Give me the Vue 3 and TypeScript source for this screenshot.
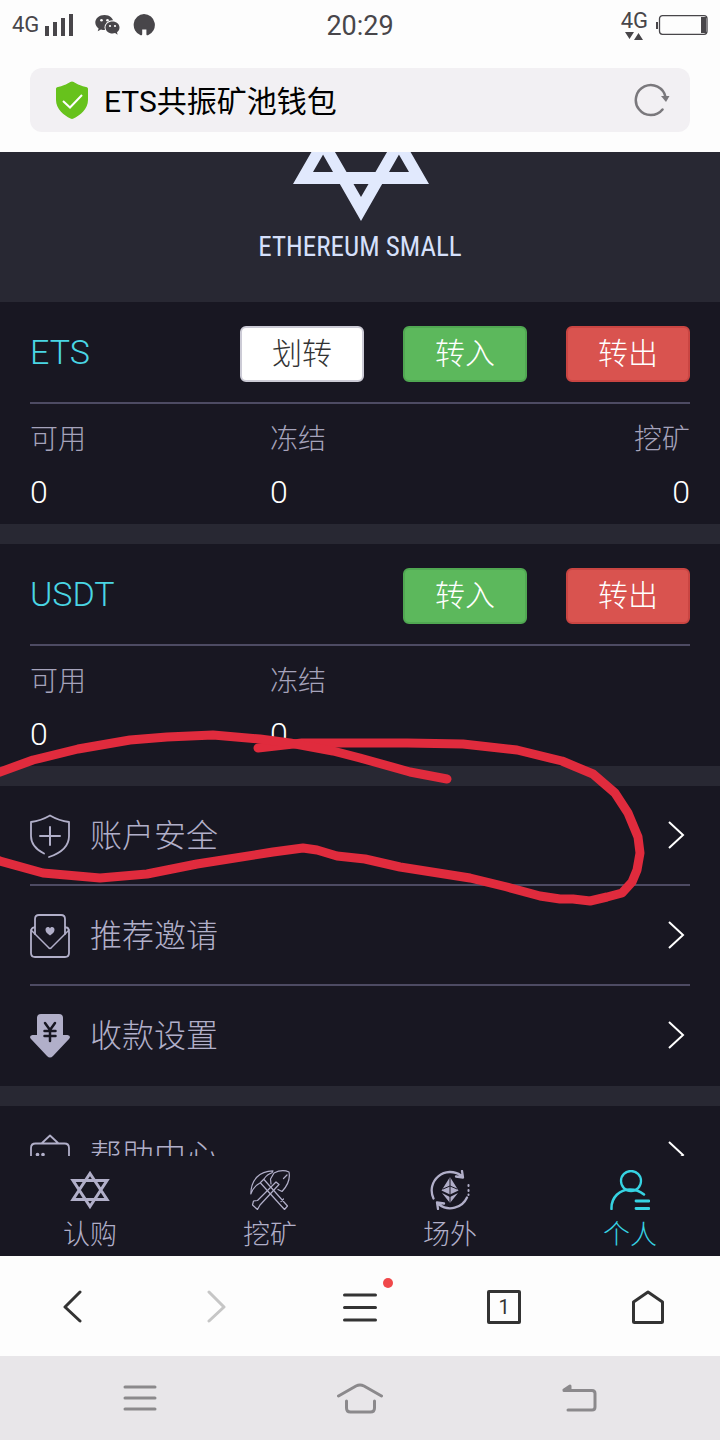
<script setup lang="ts">
import { ref } from 'vue'

interface Action { label: string; kind: 'plain' | 'in' | 'out' }
interface Field { label: string; value: number }
interface Asset { name: string; actions: Action[]; fields: Field[] }
interface Entry { id: string; label: string }

const title = ref('ETS共振矿池钱包')

const assets: Asset[] = [
  {
    name: 'ETS',
    actions: [
      { label: '划转', kind: 'plain' },
      { label: '转入', kind: 'in' },
      { label: '转出', kind: 'out' },
    ],
    fields: [
      { label: '可用', value: 0 },
      { label: '冻结', value: 0 },
      { label: '挖矿', value: 0 },
    ],
  },
  {
    name: 'USDT',
    actions: [
      { label: '转入', kind: 'in' },
      { label: '转出', kind: 'out' },
    ],
    fields: [
      { label: '可用', value: 0 },
      { label: '冻结', value: 0 },
    ],
  },
]

const groups: Entry[][] = [
  [
    { id: 'security', label: '账户安全' },
    { id: 'invite', label: '推荐邀请' },
    { id: 'payment', label: '收款设置' },
  ],
  [{ id: 'help', label: '帮助中心' }],
]

const tabs: Entry[] = [
  { id: 'subscribe', label: '认购' },
  { id: 'mining', label: '挖矿' },
  { id: 'otc', label: '场外' },
  { id: 'me', label: '个人' },
]
const activeTab = ref('me')
</script>

<template>
  <div class="screen">
    <header class="top">
      <div class="status">
        <div class="status-side">
          <span class="net">4G</span>
          <svg class="signal" width="28" height="22" viewBox="0 0 28 22" fill="#48464a">
            <path d="M0 12h4v10H0zM8 8h4v14H8zM16 4h4v18h-4zM24 0h4v22h-4z" />
          </svg>
          <svg class="wechat" width="25" height="22" viewBox="0 0 25 22">
            <path fill="#48464a" d="M9.500 1C4.300 1 .3 4.400.3 8.600c0 2.400 1.300 4.400 3.300 5.800L2.700 17.200l3.300-1.700c1.100.4 2.300.6 3.500.6 5.200 0 9.100-3.400 9.100-7.500S14.700 1 9.500 1z" />
            <ellipse cx="17.500" cy="13.500" rx="8" ry="7.200" fill="#fdfdfd" />
            <path fill="#48464a" d="M17.500 7.500c-3.900 0-7 2.600-7 6s3.100 6 7 6c.9 0 1.800-.1 2.600-.4l2.500 1.600-.6-2.500c1.600-1.100 2.500-2.800 2.500-4.700 0-3.400-3.100-6-7-6z" />
            <g fill="#fdfdfd"><circle cx="6.500" cy="6.300" r="1.300" /><circle cx="12.500" cy="6.300" r="1.300" /><circle cx="15" cy="12" r="1.100" /><circle cx="20" cy="12" r="1.100" /></g>
          </svg>
          <svg class="badge" width="22" height="22" viewBox="0 0 22 22">
            <path fill="#48464a" d="M11 0a11 11 0 0 1 4 21.200c-.9.400-1.600 0-1.600-1V15.500H9.200V20c0 1-.7 1.600-1.600 1.200A11 11 0 0 1 11 0z" />
          </svg>
        </div>
        <time class="clock">20:29</time>
        <div class="status-side end">
          <div class="data">
            <span class="net">4G</span>
            <svg width="18" height="8" viewBox="0 0 18 8" fill="#48464a"><path d="M0 0h9L4.500 7zM9 8h9l-4.500-7z" /></svg>
          </div>
          <svg width="52" height="20" viewBox="0 0 52 20">
            <rect x="3.500" y=".7" width="47.500" height="18.600" rx="3" fill="none" stroke="#48464a" stroke-width="1.300" />
            <path d="M0 7h2v7H0zM45 2h5v16h-5z" fill="#48464a" />
          </svg>
        </div>
      </div>
      <div class="address">
        <svg width="34" height="38" viewBox="0 0 34 38">
          <path d="M17 .5C19 .5 22 4 31 6c1.500.4 2 1 2 2v11c0 9-8 15.500-14.500 18.500-1 .5-2 .5-3 0C9 34.500 1 28 1 19V8c0-1 .5-1.600 2-2C12 4 15 .5 17 .5z" fill="#67c21c" />
          <path d="M8 20l7 6.500L27 14" fill="none" stroke="#fff" stroke-width="2" />
        </svg>
        <input v-model="title" class="title" type="text" aria-label="网址" />
        <button class="icon-btn" type="button" aria-label="刷新">
          <svg width="36" height="34" viewBox="0 0 36 34">
            <path d="M28.500 26.500A15 15 0 1 1 31.500 14" fill="none" stroke="#7a787c" stroke-width="2.500" stroke-linecap="round" />
            <path d="M27 13l8.500 0-3.500 6z" fill="#7a787c" />
          </svg>
        </button>
      </div>
    </header>

    <main class="content">
      <div class="hero">
        <svg class="star" width="138" height="69" viewBox="291 152 138 69" fill="#e1e9fd" fill-rule="evenodd">
          <path d="M361 66L293 184H429zM361 89L409 172H313z" />
          <path d="M361 221L293 102H429zM361 197L409 114H313z" />
        </svg>
        <h1 class="brand">ETHEREUM SMALL</h1>
      </div>

      <section v-for="asset in assets" :key="asset.name" class="asset">
        <div class="asset-head">
          <h2 class="asset-name">{{ asset.name }}</h2>
          <button v-for="a in asset.actions" :key="a.label" type="button" class="action" :class="a.kind">{{ a.label }}</button>
        </div>
        <dl class="fields">
          <div v-for="f in asset.fields" :key="f.label" class="field">
            <dt>{{ f.label }}</dt>
            <dd>{{ f.value }}</dd>
          </div>
        </dl>
      </section>

      <nav v-for="(group, i) in groups" :key="i" class="group">
        <a v-for="entry in group" :key="entry.id" class="entry" :href="'#' + entry.id">
          <svg v-if="entry.id === 'security'" width="40" height="44" viewBox="0 0 40 44" class="line">
            <path d="M14 39.500C6 35.500 1 30 1 22V8C9 7 14 5 20 1.500 26 5 31 7 39 8v14c0 10-8 17-20 21" stroke-width="1.800" />
            <path d="M10 22h20M20 13v18" stroke-width="2" />
          </svg>
          <svg v-else-if="entry.id === 'invite'" width="40" height="44" viewBox="0 0 40 44" class="line">
            <path d="M5 20V5q0-4 4-4h22q4 0 4 4v15M4 13.500Q1 13.500 1 18v21q0 4 4 4h30q4 0 4-4V18q0-4.500-3-4.500" stroke-width="1.800" />
            <path d="M1 16l17.500 17.500Q20 35.500 21.500 33.500L39 16" stroke-width="1.500" />
            <path class="solid" d="M20 21.500c-3-2-4.500-3.800-4.500-5.800 0-3 3.500-3.400 4.500-1.200 1-2.200 4.500-1.800 4.500 1.200 0 2-1.500 3.800-4.500 5.800z" />
          </svg>
          <svg v-else-if="entry.id === 'payment'" width="40" height="44" viewBox="0 0 40 44" class="line">
            <path class="solid" d="M7 4q0-4 4-4h18q4 0 4 4v17h4.500q4 1 1.500 4L23 42q-3 3-6 0L1 25q-2.500-3 1.500-4H7z" />
            <path d="M15 9l5 7 5-7M14.500 17h11M14.500 22h11M20 16v11" stroke="#181722" stroke-width="2.500" />
          </svg>
          <svg v-else width="40" height="44" viewBox="0 0 40 44" class="line">
            <path d="M1 44V14q0-4.500 4.500-4.500h29q4.500 0 4.500 4.500v30M12 9l8-7.500L28 9" stroke-width="1.800" />
            <circle class="solid" cx="7.500" cy="20.500" r="1.800" /><circle class="solid" cx="13" cy="20.500" r="1.800" />
          </svg>
          <span class="entry-label">{{ entry.label }}</span>
          <svg width="22" height="30" viewBox="0 0 22 30" fill="none" stroke="#fff" stroke-width="2"><path d="M1 1l14 13L1 27" /></svg>
        </a>
      </nav>

      <svg class="scribble" viewBox="0 152 720 1004" fill="none" stroke="#e02b3d" stroke-width="9" stroke-linecap="round" stroke-linejoin="round">
        <path d="M258 748L302 743H407L463 744 517 750 562 761 593 774 615 793 628 813 638 837 640 853 637 870 632 882 622 893 607 897 590 901 573 899H560L540 896 507 887 470 878 400 867 365 859 337 856 317 850 303 848 273 852 197 864 147 874 100 878 43 873 0 861-10 857" />
        <path d="M-10 776L0 772 33 760 78 749 130 740 167 737 213 735 260 739 290 743 333 751 360 758 410 772 447 779" />
      </svg>
    </main>

    <nav class="tabs">
      <a v-for="tab in tabs" :key="tab.id" class="tab" :class="{ active: tab.id === activeTab }" :href="'#' + tab.id" @click="activeTab = tab.id">
        <svg v-if="tab.id === 'subscribe'" width="40" height="40" viewBox="0 0 40 40" class="line sharp">
          <path d="M20 3.500L37 29.500H3zM20 36.500L37 10.500H3z" stroke-width="3" />
        </svg>
        <svg v-else-if="tab.id === 'mining'" width="40" height="40" viewBox="0 0 40 40" class="line">
          <path d="M.8 24C1 10 9 1 23 .8l-1 2C18 4 16 6 14 9l-4 4C6 15 3 18 .8 24zM14 9.500L37.500 36l-3 3.500L10.500 13M31 31.500l2.500-2.500" stroke-width="1.200" />
          <path d="M21 14l-.5-5L24 3q8-4 15-1Q41 12 32 21.500l-4-2M26 12l3 2.500L10 35l-2.500 4.500-5-4.500 1-4 4-.5zM37 5l-3.500 3.500" stroke-width="1.200" />
        </svg>
        <svg v-else-if="tab.id === 'otc'" width="40" height="40" viewBox="0 0 40 40" class="line">
          <path d="M3.500 28.500A18.500 18.500 0 0 1 31 5.500M32 1l1 6.500-7-1M37 27.500A18.500 18.500 0 0 1 9 34.500M8 39L7 32.500l7 1" stroke-width="2.300" />
          <path class="solid" d="M20 7l8.500 13.500-8.500 4-8.500-4zM12 23l8 4 8-4-8 10z" />
          <path d="M20 7v26M13 19l7-3 7 3" stroke="#181722" stroke-width="1" />
          <path d="M38.500 15v1M38.500 20v1M38.500 24.500v.5" stroke-width="2" />
        </svg>
        <svg v-else width="40" height="40" viewBox="0 0 40 40" class="line">
          <circle cx="21" cy="11" r="10" stroke-width="2.300" />
          <path d="M1.500 39C1 27 10 19.500 20 19.500q8 0 14 5" stroke-width="2.500" />
          <path d="M26 31h13M26 38.500h13" stroke-width="2.800" />
        </svg>
        <span>{{ tab.label }}</span>
      </a>
    </nav>

    <nav class="browser">
      <button type="button" aria-label="后退"><svg width="32" height="34" viewBox="0 0 32 34" class="ink"><path d="M24 2L9 17l15 14" /></svg></button>
      <button type="button" aria-label="前进" disabled><svg width="32" height="34" viewBox="0 0 32 34" class="ink faint"><path d="M9 2l15 15L9 31" /></svg></button>
      <button type="button" aria-label="菜单">
        <span class="menu-icon">
          <svg width="34" height="34" viewBox="0 0 34 34" class="ink"><path d="M1.500 5h31M1.500 17.500h31M1.500 30h31" /></svg>
          <i class="dot"></i>
        </span>
      </button>
      <button type="button" aria-label="窗口"><span class="count">1</span></button>
      <button type="button" aria-label="主页"><svg width="34" height="36" viewBox="0 0 34 36" class="ink"><path d="M17 3L31.500 13v19.500q0 1-1 1h-27q-1 0-1-1V13z" /></svg></button>
    </nav>

    <nav class="system">
      <button type="button" aria-label="最近任务"><svg width="34" height="28" viewBox="0 0 34 28" class="soft"><path d="M2 3h30M2 14h30M2 25h30" /></svg></button>
      <button type="button" aria-label="桌面"><svg width="46" height="32" viewBox="0 0 46 32" class="soft"><path d="M1.500 14L19 4q4-2 8 0l17.500 10M9.500 19v7q0 4 4 4h20q4 0 4-4v-7" /></svg></button>
      <button type="button" aria-label="返回"><svg width="36" height="30" viewBox="0 0 36 30" class="soft"><path d="M2 7.500h28q3 0 3 3V24q0 3-3 3H6M2 7L8 3v4" /></svg></button>
    </nav>
  </div>
</template>

<style>
body { margin: 0; background: #181722; }
</style>

<style scoped>
.screen {
  display: flex;
  flex-direction: column;
  height: 100vh;
  font-family: Roboto, "Noto Sans CJK SC", sans-serif;
  font-weight: 300;
  background: #181722;
}
svg { display: block; flex: none; }
button { padding: 0; border: 0; background: none; font: inherit; color: inherit; }
a { color: inherit; text-decoration: none; }

.top { flex: none; background: #fdfdfd; padding-bottom: 20px; }
.status {
  display: grid;
  grid-template-columns: 1fr auto 1fr;
  align-items: center;
  height: 50px;
  padding: 0 12px;
  margin-bottom: 18px;
  color: #48464a;
  font-weight: 400;
}
.status-side { display: flex; align-items: center; }
.end { justify-content: flex-end; gap: 8px; }
.net { font-size: 22px; line-height: 22px; }
.signal { margin-left: 6px; }
.wechat { margin-left: 22px; }
.badge { margin-left: 13px; }
.clock { padding-top: 2px; font-size: 27px; line-height: 36px; }
.data { display: flex; flex-direction: column; align-items: center; }
.address {
  display: flex;
  align-items: center;
  height: 64px;
  margin: 0 30px;
  padding: 0 20px 0 25px;
  border-radius: 12px;
  background: #f2f0f3;
}
.title {
  flex: 1;
  min-width: 0;
  margin-left: 15px;
  padding: 4px 0 0;
  border: 0;
  outline: 0;
  background: none;
  color: #000;
  font: inherit;
  font-size: 30px;
  font-weight: 400;
  line-height: 44px;
}

.content { position: relative; flex: 1; min-height: 0; overflow: hidden; }
.hero {
  display: flex;
  flex-direction: column;
  align-items: center;
  height: 150px;
  background: #282833;
}
.brand {
  margin: 8px 0 0;
  color: #d6e0fb;
  font-family: "Liberation Sans Narrow", "Roboto Condensed", Roboto, sans-serif;
  font-size: 27px;
  font-weight: 400;
  line-height: 36px;
}

.asset { padding: 0 30px; border-bottom: 20px solid #282833; }
.asset-head {
  display: flex;
  align-items: center;
  gap: 39px;
  box-sizing: border-box;
  height: 102px;
  padding-top: 4px;
  border-bottom: 2px solid #4d4b63;
}
.asset-name {
  flex: 1;
  margin: 0;
  padding-bottom: 4px;
  color: #4ad6e4;
  font-size: 34px;
  font-weight: 300;
  line-height: 44px;
}
.action {
  box-sizing: border-box;
  width: 124px;
  height: 56px;
  border: 2px solid;
  border-radius: 6px;
  color: #fff;
  font-size: 30px;
  line-height: 52px;
}
.plain { background: #fff; border-color: #cccbd6; color: #333; }
.in { background: #5cb85c; border-color: #50a852; }
.out { background: #d9534f; border-color: #ca4542; }
.fields { display: grid; grid-template-columns: 4fr 4fr 3fr; margin: 0; height: 120px; }
.field:nth-child(3) { text-align: right; }
dt { padding-top: 16px; color: #a5a3bb; font-size: 28px; line-height: 40px; }
dd { margin: 12px 0 0; color: #fff; font-size: 32px; line-height: 40px; }

.group { border-bottom: 20px solid #282833; }
.entry {
  display: flex;
  align-items: center;
  box-sizing: border-box;
  height: 100px;
  margin: 0 30px;
  padding-top: 2px;
  border-bottom: 2px solid #4d4b63;
  color: #b1afc9;
}
.entry:last-child { border-bottom-color: transparent; }
.entry-label { flex: 1; margin-left: 20px; font-size: 32px; line-height: 48px; }
.line { fill: none; stroke: currentColor; stroke-linecap: round; stroke-linejoin: round; }
.sharp { stroke-linejoin: miter; }
.solid { fill: currentColor; stroke: none; }
.scribble { position: absolute; top: 0; left: 0; width: 100%; pointer-events: none; }

.tabs { flex: none; display: flex; height: 100px; background: #181722; color: #b1afc9; }
.tab {
  flex: 1;
  display: flex;
  flex-direction: column;
  align-items: center;
  padding-top: 14px;
  font-size: 27px;
  line-height: 50px;
}
.active { color: #36d3e2; }

.browser {
  flex: none;
  display: flex;
  box-sizing: border-box;
  height: 100px;
  padding-top: 2px;
  background: #fdfdfd;
  color: #333;
}
.browser button, .system button { flex: 1; display: flex; align-items: center; justify-content: center; }
.ink { fill: none; stroke: #333; stroke-width: 3; stroke-linecap: round; stroke-linejoin: round; }
.faint { stroke: #c6c6c6; }
.menu-icon { position: relative; }
.dot { position: absolute; top: -12px; right: -16px; width: 10px; height: 10px; border-radius: 50%; background: #f0484a; }
.count {
  box-sizing: border-box;
  width: 34px;
  height: 34px;
  border: 3px solid #333;
  border-radius: 2px;
  font-size: 20px;
  font-weight: 400;
  line-height: 28px;
  text-align: center;
}
.system { flex: none; display: flex; height: 84px; padding: 0 30px; background: #e8e6e9; }
.soft { fill: none; stroke: #8b898c; stroke-width: 3; stroke-linecap: round; stroke-linejoin: round; }
</style>
